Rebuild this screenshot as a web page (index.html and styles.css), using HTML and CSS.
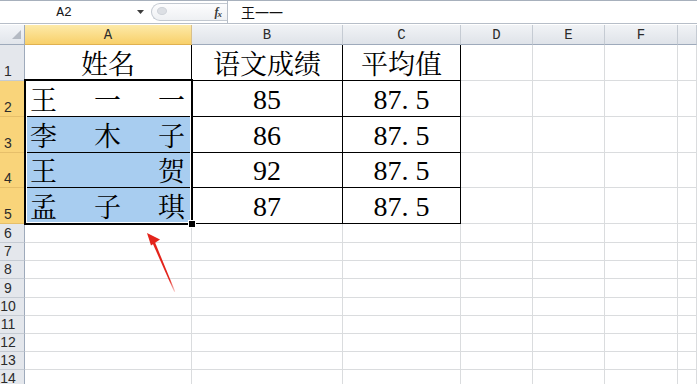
FILE: index.html
```html
<!DOCTYPE html>
<html lang="zh-CN">
<head>
<meta charset="utf-8">
<title>Excel</title>
<link rel="stylesheet" href="styles.css">
</head>
<body>
<div class="formula-bar">
  <div class="namebox">
    <span class="name">A2</span>
    <svg class="dd" width="7" height="4" viewBox="0 0 7 4"><path d="M0 0H7L3.5 4Z" fill="#3c3c3c"/></svg>
  </div>
  <div class="grip">
    <span class="knob"></span>
    <span class="fx">f<sub>x</sub></span>
  </div>
  <div class="input">王一一</div>
</div>

<div class="sheet">
  <div class="corner"><svg width="9" height="9" viewBox="0 0 9 9"><path d="M9 0V9H0Z" fill="#b4bac3"/></svg></div>
  <div class="ch hsel">A</div>
  <div class="ch">B</div>
  <div class="ch">C</div>
  <div class="ch">D</div>
  <div class="ch">E</div>
  <div class="ch">F</div>
  <div class="ch"></div>

  <div class="rh">1</div>
  <div class="c t ctr cjk">姓名</div>
  <div class="c t ctr cjk">语文成绩</div>
  <div class="c t ctr cjk">平均值</div>
  <div class="c"></div><div class="c"></div><div class="c"></div><div class="c"></div>

  <div class="rh rsel">2</div>
  <div class="c t dist cjk"><span>王</span><span>一</span><span>一</span></div>
  <div class="c t ctr num">85</div>
  <div class="c t ctr num">87<span class="dot">.</span>5</div>
  <div class="c"></div><div class="c"></div><div class="c"></div><div class="c"></div>

  <div class="rh rsel">3</div>
  <div class="c t dist cjk sel"><span>李</span><span>木</span><span>子</span></div>
  <div class="c t ctr num">86</div>
  <div class="c t ctr num">87<span class="dot">.</span>5</div>
  <div class="c"></div><div class="c"></div><div class="c"></div><div class="c"></div>

  <div class="rh rsel">4</div>
  <div class="c t dist cjk sel"><span>王</span><span>贺</span></div>
  <div class="c t ctr num">92</div>
  <div class="c t ctr num">87<span class="dot">.</span>5</div>
  <div class="c"></div><div class="c"></div><div class="c"></div><div class="c"></div>

  <div class="rh rsel">5</div>
  <div class="c t dist cjk sel"><span>孟</span><span>子</span><span>琪</span></div>
  <div class="c t ctr num">87</div>
  <div class="c t ctr num">87<span class="dot">.</span>5</div>
  <div class="c"></div><div class="c"></div><div class="c"></div><div class="c"></div>

  <div class="rh">6</div><div class="c"></div><div class="c"></div><div class="c"></div><div class="c"></div><div class="c"></div><div class="c"></div><div class="c"></div>
  <div class="rh">7</div><div class="c"></div><div class="c"></div><div class="c"></div><div class="c"></div><div class="c"></div><div class="c"></div><div class="c"></div>
  <div class="rh">8</div><div class="c"></div><div class="c"></div><div class="c"></div><div class="c"></div><div class="c"></div><div class="c"></div><div class="c"></div>
  <div class="rh">9</div><div class="c"></div><div class="c"></div><div class="c"></div><div class="c"></div><div class="c"></div><div class="c"></div><div class="c"></div>
  <div class="rh">10</div><div class="c"></div><div class="c"></div><div class="c"></div><div class="c"></div><div class="c"></div><div class="c"></div><div class="c"></div>
  <div class="rh">11</div><div class="c"></div><div class="c"></div><div class="c"></div><div class="c"></div><div class="c"></div><div class="c"></div><div class="c"></div>
  <div class="rh">12</div><div class="c"></div><div class="c"></div><div class="c"></div><div class="c"></div><div class="c"></div><div class="c"></div><div class="c"></div>
  <div class="rh">13</div><div class="c"></div><div class="c"></div><div class="c"></div><div class="c"></div><div class="c"></div><div class="c"></div><div class="c"></div>
  <div class="rh">14</div><div class="c"></div><div class="c"></div><div class="c"></div><div class="c"></div><div class="c"></div><div class="c"></div><div class="c"></div>

  <div class="selection"><span class="handle"></span></div>

  <svg class="arrow" width="40" height="64" viewBox="0 0 40 64">
    <defs>
      <linearGradient id="fade" x1="0" y1="0" x2="0" y2="1">
        <stop offset="0" stop-color="#e3241b"/>
        <stop offset="0.75" stop-color="#e3241b"/>
        <stop offset="1" stop-color="#e3241b" stop-opacity="0.2"/>
      </linearGradient>
    </defs>
    <path d="M9.5 12 L11.8 10.8 L32.2 60.5 L31.2 61 Z" fill="url(#fade)"/>
    <path d="M4 2 L17 8.5 L8 14.5 Z" fill="#e3241b"/>
  </svg>
</div>
</body>
</html>
```
FILE: styles.css
```css
html, body {
  margin: 0;
  padding: 0;
  background: #fff;
  overflow: hidden;
}

body {
  width: 697px;
  height: 384px;
  font-family: "Liberation Sans", "Noto Sans CJK SC", sans-serif;
}

/* ---------- formula bar ---------- */
.formula-bar {
  display: flex;
  height: 22px;
  border-top: 1px solid #a7b0bc;
  border-bottom: 1px solid #b7bec8;
  margin-bottom: 1px;
  background: #fff;
  box-sizing: content-box;
}

.namebox {
  width: 151px;
  display: flex;
  align-items: center;
  flex: none;
}

.name {
  width: 128px;
  text-align: center;
  font-family: "Liberation Mono", "DejaVu Sans Mono", monospace;
  font-size: 13px;
  color: #1a1a1a;
}

.dd {
  margin-left: 9px;
}

.grip {
  flex: none;
  width: 76px;
  height: 18px;
  margin-top: 2px;
  border: 1px solid #c2c8d0;
  border-right: none;
  border-radius: 10px 0 0 10px;
  background: linear-gradient(#fdfdfe, #eef0f3);
  display: flex;
  align-items: center;
  justify-content: space-between;
  padding: 0 6px 0 5px;
  box-sizing: border-box;
}

.knob {
  width: 8px;
  height: 6px;
  border-radius: 50%;
  background: #dcdfe4;
  border: 1px solid #cfd3d9;
  margin-top: -2px;
}

.fx {
  font-family: "Liberation Serif", serif;
  font-style: italic;
  font-weight: bold;
  font-size: 12px;
  color: #3b3b3b;
  letter-spacing: -1px;
}

.fx sub {
  font-size: 9px;
  vertical-align: -1px;
}

.input {
  flex: 1;
  border-left: 1px solid #b7bec8;
  padding-left: 13px;
  font-family: "Noto Sans CJK SC", sans-serif;
  font-size: 14px;
  line-height: 22px;
  color: #111;
}

/* ---------- sheet grid ---------- */
.sheet {
  position: relative;
  display: grid;
  grid-template-columns: 25px 167px 151px 118px 72px 72px 73px 1fr;
  grid-template-rows: 20px 36px 36px 36px 35px 36px 19px 18px 18px 19px 18px 18px 18px 18px 18px;
}

.sheet > div {
  box-sizing: border-box;
}

.corner {
  background: linear-gradient(#f3f5f8, #e1e5eb);
  border-right: 1px solid #9eaabb;
  border-bottom: 1px solid #9eaabb;
  display: flex;
  align-items: flex-end;
  justify-content: flex-end;
  padding: 0 3px 5px 0;
}

.corner svg {
  display: block;
}

.ch {
  background: linear-gradient(#f1f3f6, #dfe3e9);
  border-right: 1px solid #c5cbd3;
  border-bottom: 1px solid #9eaabb;
  font-family: "Liberation Mono", "DejaVu Sans Mono", monospace;
  font-size: 14px;
  color: #2b2b2b;
  text-align: center;
  line-height: 20px;
}

.ch.hsel {
  background: linear-gradient(#fdeaa9, #f8d06a);
  border-bottom-color: #e0b150;
  border-right-color: #d9c08a;
}

.rh {
  background: #e4e7ec;
  border-right: 1px solid #9eaabb;
  border-bottom: 1px solid #c5cbd3;
  font-family: "Liberation Sans", sans-serif;
  font-size: 14px;
  color: #2b2b2b;
  display: flex;
  align-items: flex-end;
  justify-content: center;
  padding: 0 8px 1px 0;
  line-height: 16px;
}

.rh.rsel {
  background: #f9d47a;
  border-bottom-color: #e6bf6a;
  border-right-color: #d6a84a;
}

.c {
  border-right: 1px solid #dadcde;
  border-bottom: 1px solid #dadcde;
  display: flex;
  align-items: flex-end;
  color: #000;
}

.c.t {
  border-right-color: #000;
  border-bottom-color: #000;
}

.c.sel {
  background: #a8cdf0;
}

.ctr {
  justify-content: center;
}

.cjk {
  font-family: "Noto Serif CJK SC", "Noto Sans CJK SC", sans-serif;
  font-size: 27px;
  line-height: 28px;
  padding-bottom: 3px;
}

.dist {
  justify-content: space-between;
  padding-left: 5px;
  padding-right: 6px;
}

.num {
  font-family: "Liberation Serif", serif;
  font-size: 28px;
  line-height: 28px;
  padding-bottom: 2px;
}

.dot {
  display: inline-block;
  width: 14px;
  text-align: left;
}

/* selection outline over A2:A5 (absolutely placed in its grid area) */
.selection {
  position: absolute;
  grid-column: 2 / 3;
  grid-row: 3 / 7;
  top: -2px;
  left: -1px;
  right: -1px;
  bottom: -1px;
  border: 2px solid #000;
  box-shadow: inset 0 0 0 1px #fff;
  pointer-events: none;
}

.handle {
  position: absolute;
  right: -5px;
  bottom: -5px;
  width: 6px;
  height: 6px;
  background: #000;
  border: 1px solid #fff;
}

.arrow {
  position: absolute;
  left: 143px;
  top: 206px;
}
```
